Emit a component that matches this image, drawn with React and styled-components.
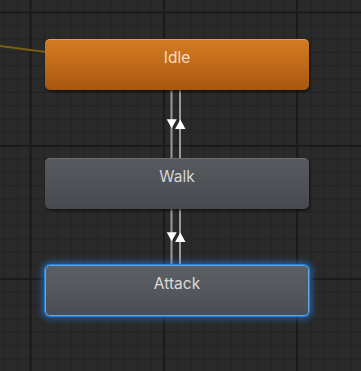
import styled, {createGlobalStyle, css} from 'styled-components';

const GlobalStyle = createGlobalStyle`
    html, body {
        margin: 0;
        padding: 0;
        background: #282828;
    }
`;

const variants = {
    entry: css`
        background: linear-gradient(180deg, #d27b22 0%, #c06a18 50%, #a6560f 100%);
        border-top: 1px solid #e3a15e;
        color: #f3dcc4;
        box-shadow: 1px 2px 2px rgba(0, 0, 0, 0.55);
    `,
    normal: css`
        background: linear-gradient(180deg, #56595e 0%, #4f5257 50%, #46494d 100%);
        border-top: 1px solid #6a6d72;
        color: #d6d6d6;
        box-shadow: 1px 2px 2px rgba(0, 0, 0, 0.5);
    `,
    selected: css`
        background: linear-gradient(180deg, #5c5f64 0%, #54575c 50%, #4a4d52 100%);
        border: 1px solid #5aa6ee;
        color: #dadada;
        box-shadow: 0 0 0 1px #2f7fd0, 0 0 6px 3px rgba(40, 130, 230, 0.6);
    `,
};

function Connector({height}) {
    const mid = height / 2;
    return (
        <Link $height={height}>
            <svg width="264" height={height} viewBox={`0 0 264 ${height}`}>
                <line x1="126.5" y1="0" x2="126.5" y2={height} stroke="#9a9a9a" strokeWidth="2" />
                <line x1="135" y1="0" x2="135" y2={height} stroke="#9a9a9a" strokeWidth="2" />
                <polygon
                    points={`121.7,${mid - 4.7} 131.7,${mid - 4.7} 126.7,${mid + 4.3}`}
                    fill="#ffffff"
                />
                <polygon
                    points={`135.3,${mid - 4.5} 140.5,${mid + 5} 130.1,${mid + 5}`}
                    fill="#ffffff"
                />
            </svg>
        </Link>
    );
}

function App() {
    return (
        <>
            <GlobalStyle />
            <Canvas>
                <Edge width="48" height="60" viewBox="0 0 48 60">
                    <line x1="0" y1="46" x2="46" y2="52" stroke="#7a5c12" strokeWidth="2" />
                </Edge>
                <Node $variant="entry">Idle</Node>
                <Connector height={68} />
                <Node $variant="normal">Walk</Node>
                <Connector height={56} />
                <Node $variant="selected">Attack</Node>
            </Canvas>
        </>
    );
}

const Canvas = styled.div`
    position: relative;
    width: 361px;
    height: 371px;
    box-sizing: border-box;
    padding: 39px 0 0 45px;
    display: flex;
    flex-direction: column;
    align-items: flex-start;
    overflow: hidden;
    background-color: #2a2a2a;
    background-image:
        linear-gradient(to right, #1a1a1a 2px, transparent 2px),
        linear-gradient(to bottom, #1a1a1a 2px, transparent 2px),
        linear-gradient(to right, #222222 1px, transparent 1px),
        linear-gradient(to bottom, #222222 1px, transparent 1px);
    background-size:
        133.33px 133.33px,
        133.33px 133.33px,
        13.333px 13.333px,
        13.333px 13.333px;
    background-position:
        29.5px 11.5px,
        29.5px 11.5px,
        30.5px 12px,
        30.5px 12px;
`;

const Edge = styled.svg`
    position: absolute;
    left: 0;
    top: 0;
`;

const Node = styled.div`
    width: 264px;
    height: 51px;
    box-sizing: border-box;
    border-radius: 5px;
    padding-top: 9px;
    text-align: center;
    font-family: Inter, "Noto Sans", sans-serif;
    font-size: 15.5px;
    line-height: 18px;
    position: relative;
    z-index: 1;
    ${({$variant}) => variants[$variant]}
`;

const Link = styled.div`
    width: 264px;
    height: ${({$height}) => $height}px;
    display: flex;

    svg {
        display: block;
        overflow: visible;
    }
`;

export default App;
